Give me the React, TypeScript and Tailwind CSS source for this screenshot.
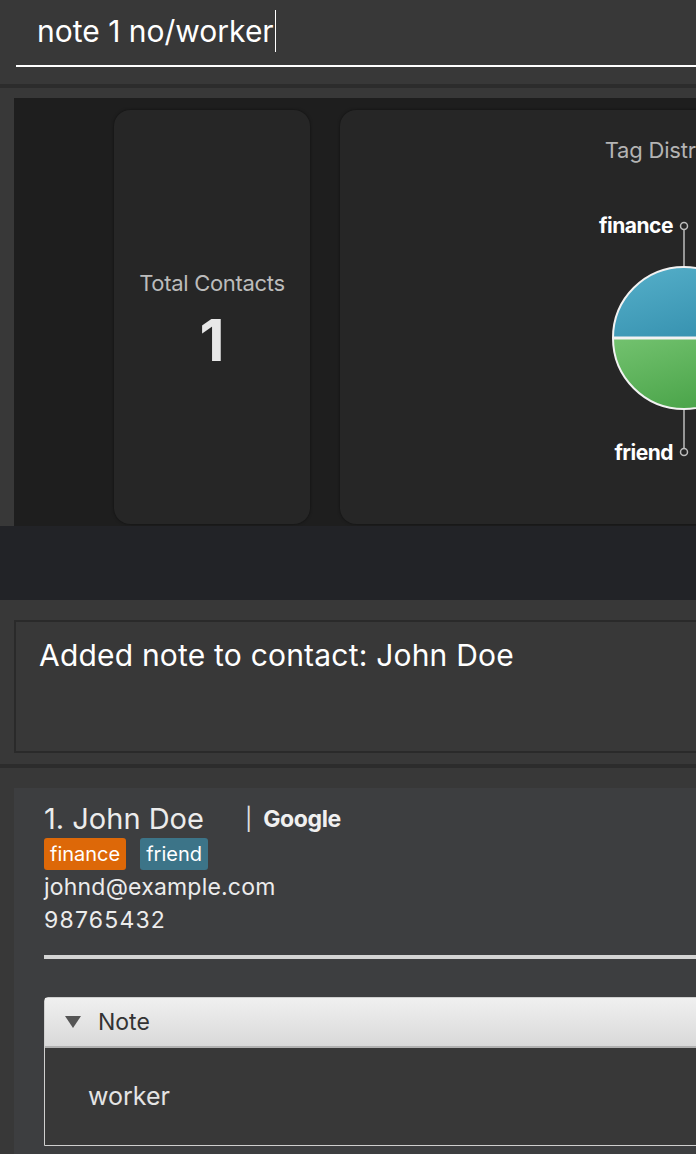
const font = { fontFamily: "Inter, 'Noto Sans', sans-serif" };

function TagChart() {
  return (
    <svg width="300" height="300" viewBox="0 0 300 300" className="mt-[12px] shrink-0">
      <defs>
        <linearGradient id="blueG" x1="0" y1="0" x2="0.6" y2="1">
          <stop offset="0%" stopColor="#56b0ca" />
          <stop offset="100%" stopColor="#3792b0" />
        </linearGradient>
        <linearGradient id="greenG" x1="0" y1="0" x2="0.6" y2="1">
          <stop offset="0%" stopColor="#73c26f" />
          <stop offset="100%" stopColor="#4aa449" />
        </linearGradient>
      </defs>
      {/* leader lines */}
      <line x1="149" y1="56" x2="149" y2="93" stroke="#bdbdbd" strokeWidth="1.5" />
      <circle cx="149" cy="52" r="3.5" fill="none" stroke="#bdbdbd" strokeWidth="1.5" />
      <line x1="149" y1="235" x2="149" y2="274" stroke="#bdbdbd" strokeWidth="1.5" />
      <circle cx="149" cy="278" r="3.5" fill="none" stroke="#bdbdbd" strokeWidth="1.5" />
      {/* pie */}
      <path d="M 78 164 A 71 71 0 0 1 220 164 Z" fill="url(#blueG)" />
      <path d="M 78 164 A 71 71 0 0 0 220 164 Z" fill="url(#greenG)" />
      <line x1="78" y1="164" x2="220" y2="164" stroke="#f2f2f2" strokeWidth="3" />
      <circle cx="149" cy="164" r="71" fill="none" stroke="#f2f2f2" strokeWidth="2" />
      <text x="138" y="59" textAnchor="end" fill="#ffffff" fontSize="21" fontWeight="700" letterSpacing="-0.5" style={font}>
        finance
      </text>
      <text x="138" y="286" textAnchor="end" fill="#ffffff" fontSize="21" fontWeight="700" letterSpacing="-0.5" style={font}>
        friend
      </text>
    </svg>
  );
}

export default function App() {
  return (
    <div className="w-[696px] h-[1154px] overflow-hidden bg-[#383838]" style={font}>
      {/* Command box */}
      <div className="h-[84px] px-[16px] pt-[10px]">
        <div className="flex items-center h-[42px] pl-[21px]">
          <span className="text-[30px] leading-[42px] text-white whitespace-nowrap">note 1 no/worker</span>
          <span className="w-[1.5px] h-[42px] bg-white ml-[1px]" />
        </div>
        <div className="mt-[13px] h-[2px] bg-white w-[700px]" />
      </div>
      <div className="h-[4px] bg-[#2c2c2c]" />

      {/* Dashboard */}
      <div className="pt-[10px] pl-[14px]">
        <div className="h-[428px] bg-[#1e1e1e] flex gap-[30px] pl-[100px] pt-[12px] overflow-hidden">
          <div className="w-[196px] h-[414px] shrink-0 rounded-[16px] bg-[#262626] shadow-[0_0_3px_rgba(0,0,0,0.5)] flex flex-col items-center pt-[159px]">
            <div className="text-[22px] leading-[28px] text-[#bcbcbc] tracking-[-0.3px] whitespace-nowrap">Total Contacts</div>
            <div className="text-[58px] leading-[60px] font-bold text-[#e8e8e8] mt-[13px]">1</div>
          </div>
          <div className="w-[690px] h-[414px] shrink-0 rounded-[16px] bg-[#262626] shadow-[0_0_3px_rgba(0,0,0,0.5)] flex flex-col items-center pt-[28px]">
            <div className="text-[22px] leading-[24px] text-[#b4b4b4] tracking-[-0.2px] whitespace-nowrap">Tag Distribution</div>
            <TagChart />
          </div>
        </div>
      </div>
      <div className="h-[74px] bg-[#222327]" />

      {/* Result display */}
      <div className="pt-[20px] pl-[14px] h-[164px]">
        <div className="h-[133px] w-[700px] border-2 border-[#2a2a2a] pl-[23px] pt-[13px]">
          <div className="text-[30px] leading-[40px] text-white tracking-[0.2px] whitespace-nowrap">Added note to contact: John Doe</div>
        </div>
      </div>
      <div className="h-[4px] bg-[#2c2c2c]" />

      {/* Person list */}
      <div className="pt-[20px] pl-[14px]">
        <div className="bg-[#3d3e40] h-[400px] pl-[30px] pt-[14px]">
          <div className="flex items-center h-[34px]">
            <span className="text-[29px] leading-[34px] text-[#ececec] whitespace-nowrap">1. John Doe</span>
            <span className="ml-[41px] text-[22px] text-[#e0e0e0]">|</span>
            <span className="ml-[11px] text-[23px] font-bold text-[#f0f0f0] tracking-[-0.4px]">Google</span>
          </div>
          <div className="flex gap-[14px] mt-[2px]">
            <span className="h-[32px] px-[6px] rounded-[3px] bg-[#dd6808] text-white text-[20px] leading-[32px]">finance</span>
            <span className="h-[32px] px-[6px] rounded-[3px] bg-[#3c7488] text-white text-[20px] leading-[32px]">friend</span>
          </div>
          <div className="text-[23px] leading-[33px] text-[#ececec] mt-[1px] tracking-[0.2px]">johnd@example.com</div>
          <div className="text-[23px] leading-[33px] text-[#ececec] tracking-[1.2px]">98765432</div>
          <div className="mt-[18px] h-[4px] bg-[#d4d4d4] w-[700px]" />

          {/* Note pane */}
          <div className="mt-[38px] w-[700px] border border-[#cfcfcf] rounded-tl-[4px]">
            <div className="h-[50px] bg-gradient-to-b from-[#f0f0f0] to-[#d9d9d9] border-b-2 border-[#b0b0b0] flex items-center pl-[19px]">
              <svg width="18" height="14" viewBox="0 0 18 14">
                <path d="M1 1 L17 1 L9 13 Z" fill="#555555" />
              </svg>
              <span className="ml-[16px] text-[23px] text-[#333333]">Note</span>
            </div>
            <div className="h-[97px] bg-[#383838] pl-[43px] flex items-center">
              <span className="text-[25px] text-[#e4e4e4]">worker</span>
            </div>
          </div>
        </div>
      </div>
    </div>
  );
}
